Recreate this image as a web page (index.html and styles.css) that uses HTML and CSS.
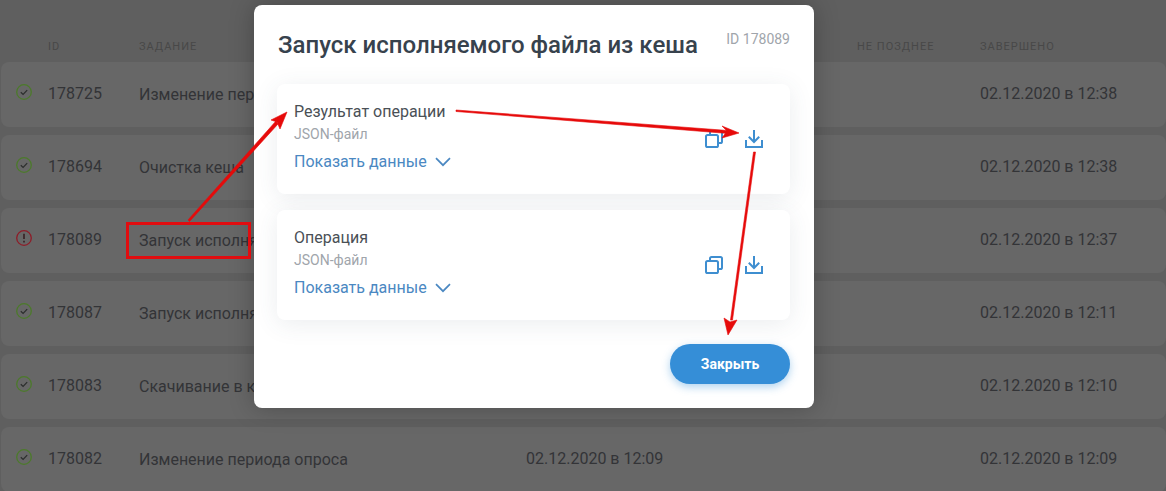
FILE: index.html
```html
<!DOCTYPE html>
<html lang="ru">
<head>
<meta charset="utf-8">
<title>Задания</title>
<link rel="stylesheet" href="styles.css">
</head>
<body>
<main class="table">
  <div class="head">
    <span></span><span>ID</span><span>Задание</span><span></span><span>Не позднее</span><span>Завершено</span>
  </div>
  <div class="row"><svg class="status ok" viewBox="0 0 16 16"><circle cx="8" cy="8" r="7.300"/><path class="mark" d="M4.800 8.200l2.300 2.200L11.200 6.200"/></svg><span class="num">178725</span><span>Изменение периода опроса</span><span></span><span></span><span class="date">02.12.2020 в 12:38</span></div>
  <div class="row"><svg class="status ok" viewBox="0 0 16 16"><circle cx="8" cy="8" r="7.300"/><path class="mark" d="M4.800 8.200l2.300 2.200L11.200 6.200"/></svg><span class="num">178694</span><span>Очистка кеша</span><span></span><span></span><span class="date">02.12.2020 в 12:38</span></div>
  <div class="row"><svg class="status err" viewBox="0 0 16 16"><circle cx="8" cy="8" r="7.300"/><path class="mark" d="M8 3.800v5.200M8 10.800v1.600"/></svg><span class="num">178089</span><span>Запуск исполняем</span><span></span><span></span><span class="date">02.12.2020 в 12:37</span></div>
  <div class="row"><svg class="status ok" viewBox="0 0 16 16"><circle cx="8" cy="8" r="7.300"/><path class="mark" d="M4.800 8.200l2.300 2.200L11.200 6.200"/></svg><span class="num">178087</span><span>Запуск исполняемого файла</span><span></span><span></span><span class="date">02.12.2020 в 12:11</span></div>
  <div class="row"><svg class="status ok" viewBox="0 0 16 16"><circle cx="8" cy="8" r="7.300"/><path class="mark" d="M4.800 8.200l2.300 2.200L11.200 6.200"/></svg><span class="num">178083</span><span>Скачивание в кеш</span><span></span><span></span><span class="date">02.12.2020 в 12:10</span></div>
  <div class="row"><svg class="status ok" viewBox="0 0 16 16"><circle cx="8" cy="8" r="7.300"/><path class="mark" d="M4.800 8.200l2.300 2.200L11.200 6.200"/></svg><span class="num">178082</span><span>Изменение периода опроса</span><span class="date">02.12.2020 в 12:09</span><span></span><span class="date">02.12.2020 в 12:09</span></div>
</main>

<section class="modal">
  <header class="modal-head">
    <h1>Запуск исполняемого файла из кеша</h1>
    <span class="modal-id">ID 178089</span>
  </header>
  <div class="cards">
    <article class="card">
      <div class="info">
        <div class="name">Результат операции</div>
        <div class="type">JSON-файл</div>
        <div class="toggle">Показать данные <svg class="chev" viewBox="0 0 16 10"><path d="M1 1.200l7 7 7-7"/></svg></div>
      </div>
      <div class="actions">
        <svg class="act" viewBox="0 0 18 18"><rect x="1" y="5" width="12" height="12" rx="1.600"/><path d="M5 4V2.600A1.600 1.600 0 0 1 6.600 1h8.800A1.600 1.600 0 0 1 17 2.600v8.800A1.600 1.600 0 0 1 15.400 13H14"/></svg>
        <svg class="act" viewBox="0 0 18 18"><path d="M1 10v7h16v-7"/><path d="M9 0v11.500M3.800 6.800L9 12l5.200-5.200"/></svg>
      </div>
    </article>
    <article class="card">
      <div class="info">
        <div class="name">Операция</div>
        <div class="type">JSON-файл</div>
        <div class="toggle">Показать данные <svg class="chev" viewBox="0 0 16 10"><path d="M1 1.200l7 7 7-7"/></svg></div>
      </div>
      <div class="actions">
        <svg class="act" viewBox="0 0 18 18"><rect x="1" y="5" width="12" height="12" rx="1.600"/><path d="M5 4V2.600A1.600 1.600 0 0 1 6.600 1h8.800A1.600 1.600 0 0 1 17 2.600v8.800A1.600 1.600 0 0 1 15.400 13H14"/></svg>
        <svg class="act" viewBox="0 0 18 18"><path d="M1 10v7h16v-7"/><path d="M9 0v11.500M3.800 6.800L9 12l5.200-5.200"/></svg>
      </div>
    </article>
  </div>
  <footer class="modal-foot"><button class="close" type="button">Закрыть</button></footer>
</section>

<div class="mark-box"></div>
<svg class="arrows" viewBox="0 0 1166 491">
  <path d="M188 220L276 121L278 124L189.500 221.500Z"/>
  <path d="M287 112L271 120L277 122L280 129Z"/>
  <path d="M456 110L728 130.500L728 133.500L456 111.500Z"/>
  <path d="M739 133L722 126L727 131L722 138Z"/>
  <path d="M753.500 152L755.500 152L732.500 320L730.500 320Z"/>
  <path d="M728 335L724 318L730 322L737 320Z"/>
</svg>
</body>
</html>
```
FILE: styles.css
```css
* { box-sizing: border-box; }
html, body { margin: 0; height: 100%; }
body {
  position: relative;
  overflow: hidden;
  background: #5f5f5f;
  font-family: Roboto, "Liberation Sans", sans-serif;
  color: #333437;
  font-size: 16px;
}
.table {
  display: flex;
  flex-direction: column;
  gap: 8px;
  padding: 39px 0 0 1px;
}
.head, .row {
  display: grid;
  grid-template-columns: 47px 91px 387px 331px 123px 1fr;
  align-items: center;
}
.head {
  height: 15px;
  font-size: 11px;
  letter-spacing: 1px;
  text-transform: uppercase;
  color: #484848;
}
.row {
  height: 65px;
  border-radius: 8px;
  background: #676767;
  line-height: 19px;
  white-space: nowrap;
}
.num, .date { position: relative; top: -1px; }
.status {
  width: 16px;
  height: 16px;
  margin-left: 15px;
  margin-top: -5px;
  fill: none;
  stroke-width: 1.300;
}
.ok { stroke: #4c7a2b; }
.err { stroke: #8e1c28; }
.mark { stroke: #2b2d2c; stroke-width: 1.200; }
.err .mark { stroke: #3a2326; stroke-width: 1.700; }

.modal {
  position: absolute;
  left: 254px;
  top: 5px;
  width: 560px;
  height: 403px;
  display: flex;
  flex-direction: column;
  padding: 26px 24px 24px 23px;
  border-radius: 8px;
  background: #fff;
  box-shadow: 0 0 24px rgba(0, 0, 0, .25);
}
.modal-head {
  display: flex;
  justify-content: space-between;
  align-items: flex-start;
  height: 53px;
}
.modal-head h1 {
  margin: 0 0 0 1px;
  font-size: 24px;
  line-height: 28px;
  font-weight: 500;
  color: #37424d;
  white-space: nowrap;
}
.modal-id {
  font-size: 14px;
  line-height: 16px;
  color: #a0a5ab;
}
.cards {
  display: flex;
  flex-direction: column;
  gap: 16px;
}
.card {
  height: 110px;
  display: flex;
  justify-content: space-between;
  align-items: flex-start;
  padding: 18px 27px 18px 17px;
  border-radius: 8px;
  background: #fff;
  box-shadow: 0 4px 24px rgba(60, 80, 100, .1);
}
.name { font-size: 16px; line-height: 19px; color: #4a5056; }
.type { margin-top: 5px; font-size: 14px; line-height: 16px; color: #a0a5ab; }
.toggle {
  display: flex;
  align-items: center;
  gap: 4px;
  margin-top: 10px;
  font-size: 16px;
  line-height: 19px;
  color: #4b88c2;
}
.chev { width: 16px; height: 10px; margin-left: 4px; fill: none; stroke: #4b88c2; stroke-width: 1.700; }
.actions {
  display: flex;
  gap: 22px;
  margin-top: 28px;
}
.act { width: 18px; height: 18px; fill: none; stroke: #3e8ed0; stroke-width: 2; }
.modal-foot {
  display: flex;
  justify-content: flex-end;
  margin-top: 24px;
}
.close {
  width: 120px;
  height: 40px;
  border: 0;
  border-radius: 20px;
  background: #358ed7;
  box-shadow: 0 3px 8px rgba(53, 142, 215, .4);
  color: #fff;
  font-family: inherit;
  font-size: 14px;
  font-weight: 700;
}
.mark-box {
  position: absolute;
  left: 126px;
  top: 222px;
  width: 125px;
  height: 37px;
  border: 3px solid #e00d10;
}
.arrows {
  position: absolute;
  left: 0;
  top: 0;
  width: 1166px;
  height: 491px;
  fill: #e60a0a;
  stroke: #e60a0a;
  stroke-width: .6;
}
```
